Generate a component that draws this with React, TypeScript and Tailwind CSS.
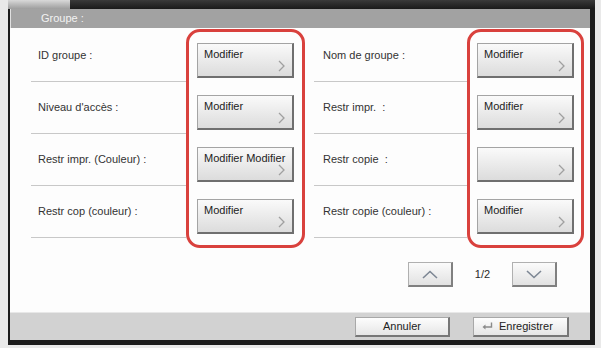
import React from "react";

const leftRows = [
    { label: "ID groupe :", value: "Modifier" },
    { label: "Niveau d'accès :", value: "Modifier" },
    { label: "Restr impr. (Couleur) :", value: "Modifier Modifier" },
    { label: "Restr cop (couleur) :", value: "Modifier" },
];

const rightRows = [
    { label: "Nom de groupe :", value: "Modifier" },
    { label: "Restr impr.  :", value: "Modifier" },
    { label: "Restr copie  :", value: "" },
    { label: "Restr copie (couleur) :", value: "Modifier" },
];

function Chevron() {
    return (
        <svg width="7" height="12" viewBox="0 0 7 12" className="absolute right-[7px] bottom-[4px]">
            <path d="M1 1 L6 6 L1 11" fill="none" stroke="#a0a0a0" strokeWidth="1.3" />
        </svg>
    );
}

function EditButton({ value }: { value: string }) {
    return (
        <div className="relative h-[35px] w-[97px] border border-[#a4a4a4] border-r-2 border-b-2 border-r-[#6f6f6f] border-b-[#6f6f6f] bg-gradient-to-b from-[#fafafa] to-[#dcdcdc] pl-[6px] pt-[4px] text-[11px] leading-[13px] text-[#222] whitespace-nowrap overflow-hidden">
            {value}
            <Chevron />
        </div>
    );
}

function Half({ rows, labelWidth, labelPad, boxWidth }: { rows: typeof leftRows; labelWidth: string; labelPad: string; boxWidth: string }) {
    return (
        <div className="flex items-start">
            {/* labels with separators */}
            <div className={`${labelWidth} pt-[1px]`}>
                {rows.map((r) => (
                    <div key={r.label} className={`flex h-[52px] items-center border-b border-[#c8c8c8] ${labelPad} text-[11px] text-[#333] whitespace-pre`}>
                        {r.label}
                    </div>
                ))}
            </div>

            {/* highlighted button column */}
            <div className={`${boxWidth} flex flex-col items-center gap-[17px] rounded-[14px] border-[3px] border-[#d9413d] pt-[11px] pb-[11px]`}>
                {rows.map((r) => (
                    <EditButton key={r.label} value={r.value} />
                ))}
            </div>
        </div>
    );
}

function ArrowButton({ up }: { up?: boolean }) {
    return (
        <div className="flex h-[25px] w-[45px] items-center justify-center border border-[#b0b0b0] border-r-2 border-b-2 border-r-[#808080] border-b-[#808080] bg-gradient-to-b from-[#fbfbfb] to-[#e2e2e2]">
            <svg width="16" height="9" viewBox="0 0 16 9">
                <path d={up ? "M1 8 L8 1.5 L15 8" : "M1 1 L8 7.5 L15 1"} fill="none" stroke="#7d8794" strokeWidth="1.6" />
            </svg>
        </div>
    );
}

export default function App() {
    return (
        <div className="h-[348px] w-[601px] bg-[#e9e9e9] font-['Liberation_Sans',Arial,sans-serif]">
            <div className="pl-[8px] pr-[6px]">
                {/* top edge */}
                <div className="flex h-[9px]">
                    <div className="w-[62px] bg-gradient-to-b from-[#d9d9d9] to-[#9d9d9d]" />
                    <div className="flex-1 bg-gradient-to-b from-[#3a3a3a] to-[#1a1a1a]" />
                </div>

                <div className="border-l-2 border-r-[5px] border-b-[5px] border-[#1c1c1c]">
                    {/* header */}
                    <div className="flex h-[19px] items-center border-l border-[#e0e0e0] bg-[#a2a2a2] pl-[30px] text-[11px] text-[#f2f2f2]">
                        Groupe :
                    </div>

                    {/* content */}
                    <div className="flex h-[284px] flex-col bg-[#fdfdfd]">
                        <div className="mt-[1px] flex pl-[21px]">
                            <Half rows={leftRows} labelWidth="w-[155px]" labelPad="pl-[7px]" boxWidth="w-[119px]" />
                            <div className="ml-[9px]">
                                <Half rows={rightRows} labelWidth="w-[153px]" labelPad="pl-[9px]" boxWidth="w-[117px]" />
                            </div>
                        </div>

                        {/* pagination */}
                        <div className="mt-[14px] flex items-center justify-end pr-[33px]">
                            <ArrowButton up />
                            <div className="w-[59px] text-center text-[11px] text-[#2a2a2a]">1/2</div>
                            <ArrowButton />
                        </div>
                    </div>

                    {/* footer bar */}
                    <div className="flex h-[28px] items-center justify-end gap-[23px] border-t border-[#e8e8e8] bg-[#d2d2d2] pr-[21px]">
                        <div className="flex h-[20px] w-[95px] items-center justify-center border border-[#a8a8a8] border-r-2 border-b-2 border-r-[#777] border-b-[#777] bg-gradient-to-b from-[#fdfdfd] to-[#e6e6e6] text-[11px] text-[#222]">
                            Annuler
                        </div>
                        <div className="flex h-[20px] w-[96px] items-center border border-[#a8a8a8] border-r-2 border-b-2 border-r-[#777] border-b-[#777] bg-gradient-to-b from-[#fdfdfd] to-[#e6e6e6] pl-[8px] text-[11px] text-[#222]">
                            <svg width="11" height="9" viewBox="0 0 11 9" className="mr-[6px]">
                                <path d="M9.5 0.5 V5 H2" fill="none" stroke="#8a8a8a" strokeWidth="1.4" />
                                <path d="M0.5 5 L3.5 2.5 V7.5 Z" fill="#8a8a8a" />
                            </svg>
                            Enregistrer
                        </div>
                    </div>
                </div>
            </div>
        </div>
    );
}
